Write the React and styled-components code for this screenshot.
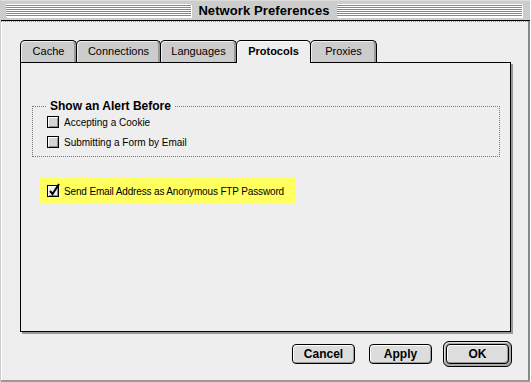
import React from 'react';
import styled, { createGlobalStyle } from 'styled-components';

const Global = createGlobalStyle`
  html, body { margin: 0; padding: 0; }
  body {
    width: 531px; height: 382px; overflow: hidden; background: #eee;
    font-family: "Liberation Sans", Arial, sans-serif; color: #000;
  }
`;

const Window = styled.div`
  width: 531px; height: 382px; box-sizing: border-box;
  display: flex; flex-direction: column;
  background: #eee;
  border-left: 1px solid #ccc;
  border-right: 1px solid #fff;
  box-shadow: inset 1px 0 #fff, inset -2px 0 #888;
`;

const TitleBar = styled.div`
  height: 20px; flex: none;
  display: flex; align-items: center; gap: 6px;
  padding: 0 8px 0 5px;
  background: #ccc;
  border-bottom: 1px solid #000;
  box-shadow: inset 0 1px #ddd;
`;

const Stripes = styled.div`
  flex: 1; height: 13px;
  background: repeating-linear-gradient(to bottom, #fff 0 1px, #888 1px 2px);
  box-shadow: 1px 1px 0 #fff;
`;

const Title = styled.div`
  font-weight: bold; font-size: 13px; letter-spacing: 0.1px;
  padding: 0 1px;
`;

const Body = styled.div`
  flex: 1; display: flex; flex-direction: column;
  padding: 18px 18px 0 19px;
  border-top: 1px dotted #999;
  border-bottom: 2px solid #999;
`;

const TabRow = styled.div`
  display: flex; height: 22px; align-items: flex-end;
`;

const Tab = styled.div`
  box-sizing: border-box;
  width: ${p => p.$w}px; height: ${p => (p.$active ? 23 : 22)}px;
  margin-bottom: ${p => (p.$active ? -1 : 0)}px;
  position: relative; z-index: ${p => (p.$active ? 2 : 1)};
  display: flex; align-items: center; justify-content: center;
  padding-bottom: ${p => (p.$active ? 2 : 1)}px;
  border: 1px solid #000; border-bottom: none;
  border-radius: 5px 5px 0 0;
  background: ${p => (p.$active ? '#eee' : '#ccc')};
  box-shadow: ${p => (p.$active ? 'inset 1px 1px #fff' : 'inset 1px 1px #eee, inset -2px 0 #999')};
  font-size: 11px; font-weight: ${p => (p.$active ? 'bold' : 'normal')};
  margin-right: -1px;
`;

const Panel = styled.div`
  box-sizing: border-box;
  width: 491px; height: 270px;
  border: 1px solid #000;
  box-shadow: 2px 2px 0 #999;
  background: #eee;
  padding: 36px 10px 0 11px;
  display: flex; flex-direction: column; align-items: flex-start;
`;

const Group = styled.fieldset`
  box-sizing: border-box;
  width: 468px; margin: 0; min-width: 0;
  border: 1px dotted #777;
  padding: 3px 0 8px 14px;
  display: flex; flex-direction: column; gap: 8px;
`;

const Legend = styled.legend`
  font-size: 12px; font-weight: bold; padding: 0 3px; margin-left: 0;
  line-height: 14px;
`;

const Row = styled.label`
  display: flex; align-items: center; gap: 5px;
  font-size: 10px; height: 12px; white-space: nowrap;
  letter-spacing: ${p => (p.$tight ? '-0.15px' : '0')};
`;

const Box = styled.span`
  box-sizing: border-box; width: 12px; height: 12px; flex: none;
  border: 1px solid #000;
  background: ${p => (p.$checked ? '#eee' : '#d4d4d4')};
  box-shadow: inset 1px 1px #fff, inset -1px -1px #888;
  display: flex; align-items: center; justify-content: center;
  overflow: visible; position: relative;
`;

const CheckSvg = styled.svg`
  position: absolute; left: 0px; top: -3px; overflow: visible;
`;

const Highlight = styled.div`
  margin: 21px 0 0 7px;
  width: 256px; height: 26px; box-sizing: border-box;
  background: #ffff60;
  display: flex; align-items: center;
  padding-left: 8px;
`;

const ButtonRow = styled.div`
  display: flex; justify-content: flex-end; align-items: center;
  margin-top: 9px; gap: 14px;
`;

const Button = styled.div`
  box-sizing: border-box;
  width: ${p => p.$w}px; height: 20px;
  border: 1px solid #000; border-radius: 4px;
  background: #ddd;
  box-shadow: inset 1px 1px #fff, inset -1px -1px #999;
  display: flex; align-items: center; justify-content: center;
  font-weight: bold; font-size: 12px;
`;

const DefaultRing = styled.div`
  box-sizing: border-box; margin-left: -3px;
  border: 1px solid #000; border-radius: 6px;
  padding: 2px; background: #aaa;
  box-shadow: inset 1px 1px #ddd;
`;

function Checkbox({ checked, tight, children }) {
  return (
    <Row $tight={tight}>
      <Box $checked={checked}>
        {checked && (
          <CheckSvg width="12" height="14" viewBox="0 0 12 14">
            <path d="M2 8 L4.5 11 L11 1" fill="none" stroke="#000" strokeWidth="2" />
          </CheckSvg>
        )}
      </Box>
      {children}
    </Row>
  );
}

const tabs = [
  { label: 'Cache', w: 57 },
  { label: 'Connections', w: 85 },
  { label: 'Languages', w: 77 },
  { label: 'Protocols', w: 75, active: true },
  { label: 'Proxies', w: 67 },
];

export default function App() {
  return (
    <>
      <Global />
      <Window>
        <TitleBar>
          <Stripes />
          <Title>Network Preferences</Title>
          <Stripes />
        </TitleBar>
        <Body>
          <TabRow>
            {tabs.map(t => (
              <Tab key={t.label} $w={t.w} $active={t.active}>{t.label}</Tab>
            ))}
          </TabRow>
          <Panel>
            <Group>
              <Legend>Show an Alert Before</Legend>
              <Checkbox>Accepting a Cookie</Checkbox>
              <Checkbox>Submitting a Form by Email</Checkbox>
            </Group>
            <Highlight>
              <Checkbox checked tight>Send Email Address as Anonymous FTP Password</Checkbox>
            </Highlight>
          </Panel>
          <ButtonRow>
            <Button $w={63}>Cancel</Button>
            <Button $w={63}>Apply</Button>
            <DefaultRing>
              <Button $w={63}>OK</Button>
            </DefaultRing>
          </ButtonRow>
        </Body>
      </Window>
    </>
  );
}
